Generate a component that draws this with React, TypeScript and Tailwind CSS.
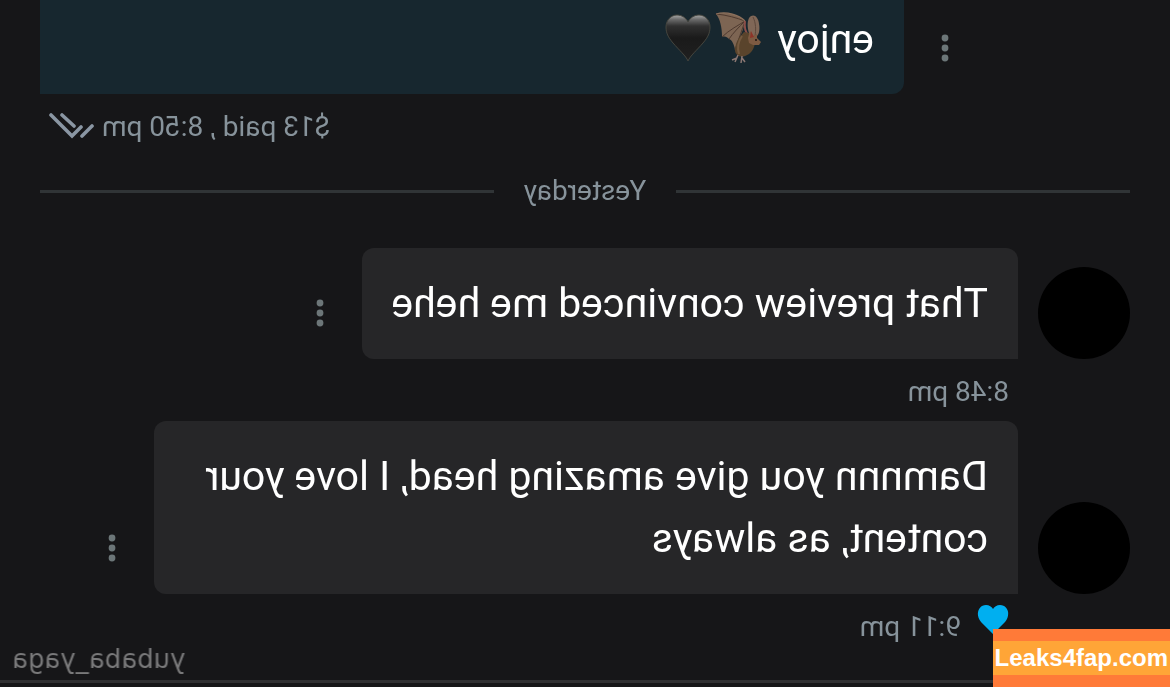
import { useId } from "react";

interface MessageProps {
  text: string;
  time: string;
  liked?: boolean;
}

function MoreButton() {
  return (
    <button type="button" aria-label="More options" className="flex h-[92px] w-10 shrink-0 items-center justify-center">
      <svg viewBox="0 0 8 28" className="h-7 w-2" fill="#6c7678">
        <circle cx="4" cy="4" r="3.4" />
        <circle cx="4" cy="14" r="3.4" />
        <circle cx="4" cy="24" r="3.4" />
      </svg>
    </button>
  );
}

function BlackHeart() {
  const id = useId();
  return (
    <svg viewBox="0 0 46 48" className="h-12 w-[46px]" role="img" aria-label="black heart">
      <defs>
        <linearGradient id={id} x1="0" y1="0" x2="0" y2="1">
          <stop offset="0" stopColor="#a8a8a8" />
          <stop offset="0.1" stopColor="#6a6a6a" />
          <stop offset="0.24" stopColor="#303030" />
          <stop offset="0.5" stopColor="#1a1a1a" />
          <stop offset="1" stopColor="#202020" />
        </linearGradient>
      </defs>
      <path
        d="M23 47C21 42 14 36 8 29C3 23 1 19 1 13C1 6 6 1 12 1C17 1 21 4 23 8C25 4 29 1 34 1C40 1 45 6 45 13C45 19 43 23 38 29C32 36 25 42 23 47Z"
        fill={`url(#${id})`}
        stroke="#45453e"
        strokeWidth="1"
      />
    </svg>
  );
}

function Bat() {
  return (
    <svg viewBox="0 0 46 52" className="h-[52px] w-[46px] -scale-x-100" role="img" aria-label="bat">
      <path d="M1 2C12 -1 24 3 30 9C29 17 25 24 22 31L20 38C19 32 17 28 14 27C12 25 10 24 7 25C7 15 5 7 1 2Z" fill="#7d6553" />
      <path d="M1 2C12 3 22 6 30 9C24 13 14 18 7 25M30 9C24 15 18 21 14 27M30 9C27 19 23 28 20 38" fill="none" stroke="#4d392f" strokeWidth="1" />
      <path d="M1 2C12 -1 24 3 30 9" fill="none" stroke="#8c705c" strokeWidth="1.2" />
      <path d="M34 6C38 1 43 4 44 12C45 17 44 22 42 24L35 24C32 17 32 10 34 6Z" fill="#806757" />
      <path d="M38 5C41 11 41 18 40 24" fill="none" stroke="#5d483c" strokeWidth="1" />
      <path d="M30 9C29 15 30 20 34 24" fill="none" stroke="#8c4f4a" strokeWidth="2" />
      <path d="M29 20C24 25 20 31 20 38C20 43 25 46 30 44C36 42 39 37 40 31L34 21Z" fill="#5a442c" />
      <path d="M27 24C23 30 22 36 24 42" fill="none" stroke="#755a40" strokeWidth="2" />
      <path d="M33 26L35 19L38 24L42 22L42 26L46 30L44 33L38 33L34 31Z" fill="#7d5a42" />
      <path d="M35 26L36 19L39 25Z" fill="#8e3429" />
      <circle cx="41" cy="28" r="1" fill="#1c1512" />
      <path d="M23 43L20 50M22 46L17 48M27 44L26 51M27 46L30 50" fill="none" stroke="#8b7773" strokeWidth="1.5" />
    </svg>
  );
}

function ReadTicks() {
  return (
    <svg viewBox="0 0 46 28" className="h-7 w-[46px] -scale-x-100" fill="none" stroke="#8a96a3" strokeWidth="3.6" strokeLinecap="round" aria-hidden="true">
      <path d="M3 2L24 23L33 14" />
      <path d="M14 2L26 13" />
      <path d="M34 23L44 13" />
    </svg>
  );
}

function Message({ text, time, liked }: MessageProps) {
  return (
    <article>
      <div className="flex items-end">
        <div className="mr-5 size-[92px] shrink-0 rounded-full bg-black" />
        <p className="max-w-[864px] rounded-xl rounded-bl-none bg-[#262628] px-[30px] pt-6 pb-[25px] text-[41px] leading-[62px] text-white">{text}</p>
        <div className="ml-[22px]">
          <MoreButton />
        </div>
      </div>
      <div className="flex h-[62px] items-center pt-1 pl-[121px] text-[28px] text-[#87939b]">
        {liked && (
          <svg viewBox="0 0 32 30" className="mr-4 mb-4 h-[30px] w-8" fill="#00aff0" role="img" aria-label="Liked">
            <path d="M16 30L4 18C-2 11 1 1 9 1C12 1 15 3 16 5C17 3 20 1 23 1C31 1 34 11 28 18Z" />
          </svg>
        )}
        <time>{time}</time>
      </div>
    </article>
  );
}

export default function App() {
  return (
    <div className="relative min-h-screen overflow-hidden bg-[#161618] font-['Roboto',sans-serif]">
      {/* the chat is shown flipped, the site badge is not */}
      <main className="flex min-h-screen -scale-x-100 flex-col">
        <div className="flex-1 px-10">
          <div className="flex items-end justify-end">
            <MoreButton />
            <p className="ml-[21px] flex h-[94px] w-[864px] items-start rounded-bl-xl bg-[#17272f] px-[30px] pt-2 text-[41px] leading-[62px] text-white">
              enjoy
              <span className="ml-4 flex items-center gap-1 pt-1">
                <Bat />
                <BlackHeart />
              </span>
            </p>
          </div>

          <div className="flex h-[62px] items-center justify-end gap-2 pt-1 pr-2 text-[28px] text-[#87939b]">
            <span>$13 paid , 8:50 pm</span>
            <ReadTicks />
          </div>

          <div className="mb-[22px] flex h-[70px] items-center gap-[30px] text-[28px] text-[#87939b]">
            <hr className="flex-1 border-t-[3px] border-[#303436]" />
            <h2>Yesterday</h2>
            <hr className="flex-1 border-t-[3px] border-[#303436]" />
          </div>

          <Message text="That preview convinced me hehe" time="8:48 pm" />
          <Message text="Damnnn you give amazing head, I love your content, as always" time="9:11 pm" liked />
        </div>
        <footer className="mb-1 border-b-[3px] border-[#303032]" />
      </main>

      <a href="#profile" className="absolute bottom-3 left-3 -scale-x-100 font-['DejaVu_Sans',sans-serif] text-[26px] leading-8 text-[#79797a]">
        yubaba_yaga
      </a>
      <div className="absolute right-0 bottom-0 bg-[#ff7a38] py-3">
        <a href="#home" className="block bg-[#ffa537] px-0.5 font-['Liberation_Sans',sans-serif] text-2xl leading-[34px] font-bold text-white">
          Leaks4fap.com
        </a>
      </div>
    </div>
  );
}
